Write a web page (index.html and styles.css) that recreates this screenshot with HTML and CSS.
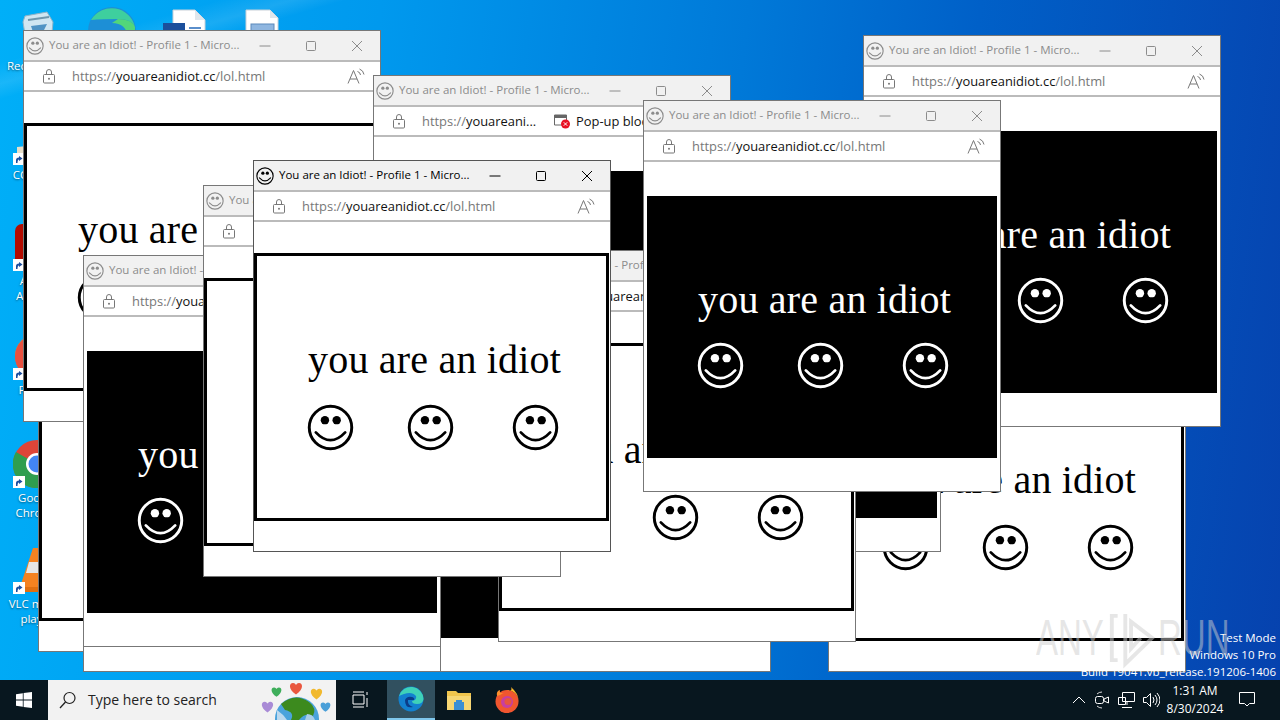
FILE: index.html
```html
<!DOCTYPE html>
<html lang="en">
<head>
    <meta charset="UTF-8">
    <meta name="viewport" content="width=device-width, initial-scale=1.0">
    <title>You are an Idiot!</title>
    <link rel="stylesheet" href="styles.css">
</head>
<body>

    <!-- Shared icons -->
    <svg class="sprites" width="0" height="0">
        <symbol id="face" viewBox="-24 -24 48 48">
            <circle r="21.700" fill="none" stroke="currentColor" stroke-width="3"/>
            <circle cx="-5.700" cy="-7.500" r="4.300" fill="currentColor"/>
            <circle cx="6.300" cy="-7.500" r="4.300" fill="currentColor"/>
            <path d="M-15 5 Q0 21 15 5" fill="none" stroke="currentColor" stroke-width="2.800" stroke-linecap="round"/>
        </symbol>
        <symbol id="lock" viewBox="0 0 14 16">
            <path d="M2.500 6.500h9a1 1 0 0 1 1 1v6.500a1 1 0 0 1-1 1h-9a1 1 0 0 1-1-1v-6.500a1 1 0 0 1 1-1zM4.500 6.500v-2.500a2.500 2.500 0 0 1 5 0v2.500" fill="none" stroke="currentColor"/>
            <circle cx="7" cy="10.800" r="1" fill="currentColor"/>
        </symbol>
        <symbol id="aloud" viewBox="0 0 18 16">
            <path d="M1 15.500L6.500 2.500L12 15.500M3 11h7M10.500 3.500a4 4 0 0 1 3 3.500M12.500 1a7 7 0 0 1 4.500 5.500" fill="none" stroke="currentColor"/>
        </symbol>
        <symbol id="min" viewBox="0 0 12 12"><path d="M0.500 6h11" stroke="currentColor" fill="none"/></symbol>
        <symbol id="max" viewBox="0 0 12 12"><rect x="1.500" y="1.500" width="9" height="9" rx="1" stroke="currentColor" fill="none"/></symbol>
        <symbol id="shut" viewBox="0 0 12 12"><path d="M1 1L11 11M11 1L1 11" stroke="currentColor" fill="none"/></symbol>
        <symbol id="arrow" viewBox="0 0 12 12">
            <rect width="12" height="12" fill="#fff"/>
            <path d="M3 10V7q0-2.500 3-2.500V3l3.500 2.500L6 8V6.500q-1.500 0-1.500 3.500z" fill="#1d4f9f"/>
        </symbol>
        <symbol id="heart" viewBox="-8 -8 16 16">
            <path d="M0 6.500C-8 1-7-5-3-5C-1-5 0-3 0-3C0-3 1-5 3-5C7-5 8 1 0 6.500z" fill="currentColor"/>
        </symbol>
    </svg>

    <div class="desktop">
        <!-- Desktop shortcuts -->
        <div class="shortcut sc-bin">
            <svg width="48" height="48" viewBox="0 0 48 48"><path d="M12 8L34 4L40 14L37 46H15L10 14z" fill="#cfe6f2" stroke="#8fb4c8"/><path d="M15 12L36 9" stroke="#6f97ad" stroke-width="2"/><path d="M18 18L34 16L30 24L20 24z" fill="#4f93c4"/></svg>
            <span>Recycle Bin</span>
        </div>
        <div class="shortcut sc-edge">
            <svg width="48" height="48" viewBox="0 0 48 48"><circle cx="24" cy="24" r="24" fill="#1d8fd6"/><path d="M3 13A24 24 0 0 1 47 20Q44 12 30 12Q14 12 3 13z" fill="#3ecf9e"/><path d="M30 12Q44 12 47 20Q48 28 40 30Q38 16 24 16z" fill="#52d67a"/></svg>
        </div>
        <div class="shortcut sc-word">
            <svg width="48" height="48" viewBox="0 0 48 48"><path d="M10 4H32L42 14V48H10z" fill="#fff" stroke="#c8d0d8"/><path d="M32 4V14H42" fill="#dfe6ec"/><rect x="0" y="17" width="22" height="22" fill="#1b4f9c"/><path d="M26 22H38M26 27H38" stroke="#5a8ecb" stroke-width="2"/></svg>
        </div>
        <div class="shortcut sc-pic">
            <svg width="48" height="48" viewBox="0 0 48 48"><path d="M8 4H32L40 12V48H8z" fill="#fff" stroke="#c8d0d8"/><path d="M32 4V12H40" fill="#dfe6ec"/><rect x="13" y="18" width="23" height="16" fill="#8fb6e0" stroke="#5d89bb"/></svg>
        </div>
        <div class="shortcut sc-ccleaner">
            <svg width="48" height="48" viewBox="0 0 48 48"><path d="M4 30L24 28V48H4z" fill="#e8dfc8"/><use href="#arrow" x="0" y="36" width="12" height="12"/></svg>
            <span>CCleaner</span>
        </div>
        <div class="shortcut sc-acrobat">
            <svg width="48" height="48" viewBox="0 0 48 48"><rect x="2" y="1" width="44" height="44" rx="7" fill="#b30c00"/><use href="#arrow" x="0" y="36" width="12" height="12"/></svg>
            <span>Adobe Acrobat</span>
        </div>
        <div class="shortcut sc-firefox">
            <svg width="48" height="48" viewBox="0 0 48 48"><circle cx="24" cy="24" r="22" fill="#f5722b"/><path d="M2 24A22 22 0 0 1 14 5L14 44A22 22 0 0 1 2 24z" fill="#e8503f"/><use href="#arrow" x="0" y="36" width="12" height="12"/></svg>
            <span>Firefox</span>
        </div>
        <div class="shortcut sc-chrome">
            <svg width="48" height="48" viewBox="0 0 48 48"><circle cx="24" cy="24" r="24" fill="#dd4538"/><path d="M24 24L3 12A24 24 0 0 0 26 48z" fill="#2f9e4f"/><path d="M24 24L26 48A24 24 0 0 0 46 14z" fill="#f6c72e"/><circle cx="24" cy="24" r="11" fill="#fff"/><circle cx="24" cy="24" r="8.500" fill="#4285f4"/><use href="#arrow" x="0" y="36" width="12" height="12"/></svg>
            <span>Google Chrome</span>
        </div>
        <div class="shortcut sc-vlc">
            <svg width="48" height="48" viewBox="0 0 48 48"><path d="M20 2L28 2L42 44H6z" fill="#f58220"/><path d="M16 16L32 16L35 27H13z" fill="#e6e6e6"/><rect x="6" y="41" width="36" height="5" fill="#e06f10"/><use href="#arrow" x="0" y="36" width="12" height="12"/></svg>
            <span>VLC media player</span>
        </div>

        <!-- Browser popups, bottom of the stack first. The first few only show their lower edge -->
        <div class="win pos-38">
            <div class="win-title"></div>
            <div class="win-url"></div>
            <div class="page"><div class="box"></div></div>
        </div>

        <div class="win dark pos-413">
            <div class="win-title"></div>
            <div class="win-url"></div>
            <div class="page"><div class="box"></div></div>
        </div>

        <div class="win pos-83b">
            <div class="win-title"></div>
            <div class="win-url"></div>
            <div class="page"><div class="box"></div></div>
        </div>

        <div class="win pos-828">
            <div class="win-title"></div>
            <div class="win-url"></div>
            <div class="page"><div class="box"><h1>you are an idiot</h1><div class="faces"><svg><use href="#face"/></svg><svg><use href="#face"/></svg><svg><use href="#face"/></svg></div></div></div>
        </div>

        <div class="win dark pos-583">
            <div class="win-title"></div>
            <div class="win-url"></div>
            <div class="page"><div class="box"></div></div>
        </div>

        <div class="win pos-23">
            <div class="win-title"><svg class="fav"><use href="#face"/></svg><span class="win-name">You are an Idiot! - Profile 1 - Micro...</span><svg class="btn"><use href="#min"/></svg><svg class="btn"><use href="#max"/></svg><svg class="btn"><use href="#shut"/></svg></div>
            <div class="win-url"><svg class="lock"><use href="#lock"/></svg><span class="url">https://<b>youareanidiot.cc</b>/lol.html</span><svg class="aloud"><use href="#aloud"/></svg></div>
            <div class="page"><div class="box"><h1>you are an idiot</h1><div class="faces"><svg><use href="#face"/></svg><svg><use href="#face"/></svg><svg><use href="#face"/></svg></div></div></div>
        </div>

        <div class="win dark pos-373">
            <div class="win-title"><svg class="fav"><use href="#face"/></svg><span class="win-name">You are an Idiot! - Profile 1 - Micro...</span><svg class="btn"><use href="#min"/></svg><svg class="btn"><use href="#max"/></svg><svg class="btn"><use href="#shut"/></svg></div>
            <div class="win-url">
                <svg class="lock"><use href="#lock"/></svg>
                <span class="url">https://<b>youareani...</b></span>
                <svg class="blocked" viewBox="0 0 18 16"><path d="M1.500 2h12v10h-12z" fill="none" stroke="#666"/><path d="M1.500 2h12v3h-12z" fill="#666"/><circle cx="12.500" cy="11" r="4.500" fill="#e81123"/><path d="M10.800 9.300l3.400 3.400M14.200 9.300l-3.400 3.400" stroke="#fff"/></svg>
                <span class="blocked-text">Pop-up blocked</span>
            </div>
            <div class="page"><div class="box"></div></div>
        </div>

        <div class="win pos-498">
            <div class="win-title"><svg class="fav"><use href="#face"/></svg><span class="win-name">You are an Idiot! - Profile 1 - Micro...</span><svg class="btn"><use href="#min"/></svg><svg class="btn"><use href="#max"/></svg><svg class="btn"><use href="#shut"/></svg></div>
            <div class="win-url"><svg class="lock"><use href="#lock"/></svg><span class="url">https://<b>youareanidiot.cc</b>/lol.html</span><svg class="aloud"><use href="#aloud"/></svg></div>
            <div class="page"><div class="box"><h1>you are an idiot</h1><div class="faces"><svg><use href="#face"/></svg><svg><use href="#face"/></svg><svg><use href="#face"/></svg></div></div></div>
        </div>

        <div class="win dark pos-83">
            <div class="win-title"><svg class="fav"><use href="#face"/></svg><span class="win-name">You are an Idiot! - Profile 1 - Micro...</span><svg class="btn"><use href="#min"/></svg><svg class="btn"><use href="#max"/></svg><svg class="btn"><use href="#shut"/></svg></div>
            <div class="win-url"><svg class="lock"><use href="#lock"/></svg><span class="url">https://<b>youareanidiot.cc</b>/lol.html</span><svg class="aloud"><use href="#aloud"/></svg></div>
            <div class="page"><div class="box"><h1>you are an idiot</h1><div class="faces"><svg><use href="#face"/></svg><svg><use href="#face"/></svg><svg><use href="#face"/></svg></div></div></div>
        </div>

        <div class="win pos-203">
            <div class="win-title"><svg class="fav"><use href="#face"/></svg><span class="win-name">You are an Idiot! - Profile 1 - Micro...</span></div>
            <div class="win-url"><svg class="lock"><use href="#lock"/></svg></div>
            <div class="page"><div class="box"></div></div>
        </div>

        <div class="win active pos-253">
            <div class="win-title"><svg class="fav"><use href="#face"/></svg><span class="win-name">You are an Idiot! - Profile 1 - Micro...</span><svg class="btn"><use href="#min"/></svg><svg class="btn"><use href="#max"/></svg><svg class="btn"><use href="#shut"/></svg></div>
            <div class="win-url"><svg class="lock"><use href="#lock"/></svg><span class="url">https://<b>youareanidiot.cc</b>/lol.html</span><svg class="aloud"><use href="#aloud"/></svg></div>
            <div class="page"><div class="box"><h1>you are an idiot</h1><div class="faces"><svg><use href="#face"/></svg><svg><use href="#face"/></svg><svg><use href="#face"/></svg></div></div></div>
        </div>

        <div class="win dark pos-863">
            <div class="win-title"><svg class="fav"><use href="#face"/></svg><span class="win-name">You are an Idiot! - Profile 1 - Micro...</span><svg class="btn"><use href="#min"/></svg><svg class="btn"><use href="#max"/></svg><svg class="btn"><use href="#shut"/></svg></div>
            <div class="win-url"><svg class="lock"><use href="#lock"/></svg><span class="url">https://<b>youareanidiot.cc</b>/lol.html</span><svg class="aloud"><use href="#aloud"/></svg></div>
            <div class="page"><div class="box"><h1>you are an idiot</h1><div class="faces"><svg><use href="#face"/></svg><svg><use href="#face"/></svg><svg><use href="#face"/></svg></div></div></div>
        </div>

        <div class="win dark pos-643">
            <div class="win-title"><svg class="fav"><use href="#face"/></svg><span class="win-name">You are an Idiot! - Profile 1 - Micro...</span><svg class="btn"><use href="#min"/></svg><svg class="btn"><use href="#max"/></svg><svg class="btn"><use href="#shut"/></svg></div>
            <div class="win-url"><svg class="lock"><use href="#lock"/></svg><span class="url">https://<b>youareanidiot.cc</b>/lol.html</span><svg class="aloud"><use href="#aloud"/></svg></div>
            <div class="page"><div class="box"><h1>you are an idiot</h1><div class="faces"><svg><use href="#face"/></svg><svg><use href="#face"/></svg><svg><use href="#face"/></svg></div></div></div>
        </div>

        <!-- Windows test mode text and sandbox watermark sit over everything -->
        <div class="build">
            <div>Test Mode</div>
            <div>Windows 10 Pro</div>
            <div>Build 19041.vb_release.191206-1406</div>
        </div>
        <div class="anyrun">
            <span>ANY</span>
            <svg width="48" height="62" viewBox="0 0 50 62"><path d="M10 8H4V54H10M18 6V58L46 31L24 14V42L34 31" fill="none" stroke="currentColor" stroke-width="4"/></svg>
            <span>RUN</span>
        </div>
    </div>

    <div class="taskbar">
        <div class="start">
            <svg width="16" height="16" viewBox="0 0 16 16"><path d="M0 2.200L6.800 1.200V7.600H0zM7.600 1.100L16 0V7.600H7.600zM0 8.400H6.800V14.800L0 13.800zM7.600 8.400H16V16L7.600 14.900z" fill="#fff"/></svg>
        </div>
        <div class="search">
            <svg class="search-icon" width="18" height="18" viewBox="0 0 18 18"><circle cx="10.500" cy="7" r="5.500" fill="none" stroke="#222" stroke-width="1.200"/><path d="M6.500 11L1 17" stroke="#222" stroke-width="1.300"/></svg>
            <span class="search-text">Type here to search</span>
            <svg class="search-art" width="80" height="40" viewBox="0 0 80 40">
                <circle cx="38" cy="39" r="22" fill="#4aa3dc"/>
                <path d="M22 24Q36 12 50 22Q58 28 54 36Q46 32 40 40H32Q36 32 26 30z" fill="#3c8a1e"/>
                <path d="M18 30Q24 34 28 40H18z" fill="#bcd9ee"/>
                <path d="M48 34Q54 34 56 40H46z" fill="#a9cfe8"/>
                <use href="#heart" x="11" y="5" width="13" height="13" class="heart-green"/>
                <use href="#heart" x="29" y="0" width="16" height="16" class="heart-red"/>
                <use href="#heart" x="50" y="6" width="15" height="15" class="heart-yellow"/>
                <use href="#heart" x="1" y="19" width="15" height="15" class="heart-purple"/>
                <use href="#heart" x="60" y="20" width="13" height="13" class="heart-blue"/>
            </svg>
        </div>
        <div class="task-app">
            <svg width="18" height="18" viewBox="0 0 18 18"><path d="M2 1H13M2 4H13V13H2zM2 16H13M16 1v3M16 7v9" fill="none" stroke="#fff"/></svg>
        </div>
        <div class="task-app current">
            <svg width="26" height="26" viewBox="0 0 26 26"><circle cx="13" cy="13" r="12.500" fill="#1381cf"/><path d="M1 10A12.500 12.500 0 0 1 25.500 13Q25 18 19 18Q14 18 14 15Q19 14 18 10Q14 5 6 8Q3 9 1 10z" fill="#3fd1b8"/><path d="M7 14a6 6 0 0 1 7-3q3 1 2 3H10q-1 5 5 7q-8 2-8-7z" fill="#0b3d88"/></svg>
        </div>
        <div class="task-app">
            <svg width="24" height="22" viewBox="0 0 24 22"><path d="M0 2H9L11 4H24V21H0z" fill="#f0c54d"/><rect y="7" width="24" height="14" fill="#f7d774"/><rect x="7" y="13" width="10" height="8" fill="#3b8fd4"/><rect x="9" y="11" width="6" height="2" fill="#3b8fd4"/></svg>
        </div>
        <div class="task-app">
            <svg width="24" height="26" viewBox="0 0 24 26"><circle cx="12" cy="14.500" r="11.500" fill="#f0562f"/><path d="M12 3a11.500 11.500 0 0 1 11.500 11.500Q24 7 16 0Q18 5 12 3z" fill="#fbb529"/><path d="M2 9Q1 4 5 3Q4 7 9 6Q3 9 2 9z" fill="#fd8f2c"/><circle cx="12" cy="15" r="6" fill="#c73fa0"/><circle cx="13" cy="14.500" r="3.500" fill="#e8553f"/></svg>
        </div>
        <div class="tray">
            <svg width="14" height="8" viewBox="0 0 14 8"><path d="M1 7L7 1L13 7" fill="none" stroke="#fff"/></svg>
            <svg width="16" height="18" viewBox="0 0 16 18"><path d="M3 3Q5 1 8 1M3 15Q5 17 8 17" fill="none" stroke="#ddd"/><rect x="1.500" y="5.500" width="8" height="7" rx="2" fill="none" stroke="#fff"/><path d="M10 8L14.500 6V12L10 10z" fill="none" stroke="#fff"/></svg>
            <svg width="17" height="16" viewBox="0 0 17 16"><path d="M4.500 .5H16.500V9.500H4.500zM.5 5.500H7.500V12.500H.5zM9 9.500V13M4 15.500H14" fill="#07151f" stroke="#fff"/></svg>
            <svg width="17" height="16" viewBox="0 0 17 16"><path d="M.5 5.500H3.500L7.500 1.500V14.500L3.500 10.500H.5zM10 5q2 3 0 6M12 3q4 5 0 10M14 1q6 7 0 14" fill="none" stroke="#fff"/></svg>
        </div>
        <div class="clock">
            <div>1:31 AM</div>
            <div>8/30/2024</div>
        </div>
        <div class="notify">
            <svg width="16" height="16" viewBox="0 0 16 16"><path d="M.5 .5H15.500V11.500H10.500L8 14L5.500 11.500H.5z" fill="none" stroke="#fff"/></svg>
        </div>
    </div>

</body>
</html>
```

FILE: styles.css
```css
* {
    box-sizing: border-box;
}

body {
    margin: 0;
    width: 1280px;
    height: 720px;
    overflow: hidden;
    font-family: "Open Sans", "Noto Sans", sans-serif;
}

.sprites {
    position: absolute;
}

/* Wallpaper */
.desktop {
    position: relative;
    height: 680px;
    background:
        linear-gradient(164deg, rgba(255, 255, 255, 0) 6%, rgba(255, 255, 255, 0.10) 8%, rgba(255, 255, 255, 0) 9.5%),
        linear-gradient(97deg, #00aff8 0%, #0099ee 28%, #0079d8 55%, #0060c8 72%, #0642ae 100%);
}

/* Desktop shortcuts sit at fixed places on the canvas */
.shortcut {
    position: absolute;
    left: 0;
    width: 74px;
    display: flex;
    flex-direction: column;
    align-items: center;
    color: #fff;
    font-size: 11.5px;
    line-height: 15px;
    text-align: center;
    text-shadow: 0 1px 2px rgba(0, 0, 0, 0.5);
}

.shortcut svg {
    display: block;
    flex: none;
}

.shortcut span {
    margin-top: 2px;
}

.sc-bin { top: 8px; }
.sc-edge { top: 7px; left: 75px; }
.sc-word { top: 6px; left: 150px; }
.sc-pic { top: 6px; left: 225px; }
.sc-ccleaner { top: 117px; }
.sc-acrobat { top: 223px; }
.sc-firefox { top: 332px; }
.sc-chrome { top: 440px; }
.sc-vlc { top: 546px; }

/* Popup window */
.win {
    position: absolute;
    width: 358px;
    height: 392px;
    background: #fff;
    border: 1px solid #777;
    color: #000;
}

.pos-38 { left: 38px; top: 260px; }
.pos-413 { left: 413px; top: 280px; }
.pos-83b { left: 83px; top: 280px; }
.pos-828 { left: 828px; top: 280px; }
.pos-583 { left: 583px; top: 160px; }
.pos-23 { left: 23px; top: 30px; }
.pos-373 { left: 373px; top: 75px; }
.pos-498 { left: 498px; top: 250px; }
.pos-83 { left: 83px; top: 255px; }
.pos-203 { left: 203px; top: 185px; }
.pos-253 { left: 253px; top: 160px; }
.pos-863 { left: 863px; top: 35px; }
.pos-643 { left: 643px; top: 100px; }

.win-title {
    height: 31px;
    display: flex;
    align-items: center;
    background: #f1f1f1;
    border-bottom: 2px solid #bbb;
    color: #8c8c8c;
}

.win.active .win-title {
    color: #000;
}

.win.active {
    border-color: #555;
}

.fav {
    width: 18px;
    height: 18px;
    margin-left: 2px;
    flex: none;
}

.win-name {
    margin: -2px 0 0 5px;
    width: 205px;
    flex: none;
    font-size: 11.5px;
    white-space: nowrap;
}

.btn {
    width: 12px;
    height: 12px;
    margin-left: 34px;
    flex: none;
}

.win-title .btn:nth-of-type(2) {
    margin-left: 5px;
}

.win-url {
    height: 30px;
    display: flex;
    align-items: center;
    border-bottom: 2px solid #bbb;
    color: #777;
    background: #fff;
}

.lock {
    width: 14px;
    height: 16px;
    margin-left: 18px;
    flex: none;
}

.url {
    margin-left: 16px;
    width: 275px;
    flex: none;
    font-size: 12.9px;
    white-space: nowrap;
}

.url b {
    font-weight: 400;
    color: #111;
}

.aloud {
    width: 18px;
    height: 16px;
    flex: none;
}

.blocked {
    width: 18px;
    height: 16px;
    margin-left: -144px;
    flex: none;
}

.blocked-text {
    margin-left: 5px;
    font-size: 12.9px;
    color: #111;
    white-space: nowrap;
}

/* The page itself */
.page {
    padding: 31px 0 0 0;
}

.box {
    width: 355px;
    height: 268px;
    border: 3px solid #000;
    background: #fff;
    color: #000;
    padding: 81px 0 0 51px;
}

.win.dark .box {
    background: #000;
    color: #fff;
    border-color: #fff;
    border-right-width: 2px;
}

.box h1 {
    margin: 0;
    font-family: "Liberation Serif", serif;
    font-size: 40px;
    line-height: 46px;
    font-weight: 400;
    letter-spacing: 0.2px;
    white-space: nowrap;
}

.faces {
    display: flex;
    margin: 21px 0 0 -1px;
}

.win.dark .faces {
    margin-top: 19px;
}

.faces svg {
    width: 47px;
    height: 47px;
    flex: none;
    margin-left: 53px;
}

.faces svg:first-child {
    margin-left: 0;
}

.faces svg:last-child {
    margin-left: 58px;
}

/* Over everything */
.build {
    position: absolute;
    right: 4px;
    bottom: 0;
    color: #fff;
    font-size: 11.5px;
    line-height: 17px;
    text-align: right;
    white-space: nowrap;
}

.anyrun {
    position: absolute;
    left: 1036px;
    top: 607px;
    display: flex;
    align-items: center;
    gap: 2px;
    color: rgba(205, 205, 205, 0.5);
    font-family: "Liberation Sans", sans-serif;
    font-size: 50px;
    line-height: 62px;
}

.anyrun span {
    display: inline-block;
    width: 70px;
    transform: scaleX(0.66);
    transform-origin: left center;
}

/* Taskbar */
.taskbar {
    height: 40px;
    display: flex;
    align-items: center;
    background: #08171f;
    color: #fff;
}

.start {
    width: 48px;
    display: flex;
    justify-content: center;
}

.search {
    width: 288px;
    height: 40px;
    display: flex;
    align-items: center;
    background: #f2f2f2;
    color: #222;
    overflow: hidden;
}

.search-icon {
    margin-left: 11px;
    flex: none;
}

.search-text {
    margin: -2px 0 0 11px;
    width: 164px;
    flex: none;
    font-size: 14px;
    white-space: nowrap;
}

.search-art {
    margin-left: 7px;
    flex: none;
}

.heart-green { color: #3fae5b; }
.heart-red { color: #e9573f; }
.heart-yellow { color: #f1b92e; }
.heart-purple { color: #a98bd6; }
.heart-blue { color: #4a9fd8; }

.task-app {
    width: 48px;
    height: 40px;
    display: flex;
    align-items: center;
    justify-content: center;
}

.task-app.current {
    margin-left: 3px;
    background: #31505f;
    border-bottom: 2px solid #7fc7ec;
}

.task-app:last-of-type {
    margin-left: 2px;
}

.tray {
    margin-left: auto;
    display: flex;
    align-items: center;
    gap: 8px;
}

.clock {
    width: 68px;
    margin: 0 7px 0 1px;
    font-size: 12px;
    line-height: 18px;
    text-align: center;
}

.notify {
    width: 22px;
    margin-right: 22px;
    display: flex;
    justify-content: center;
}
```
